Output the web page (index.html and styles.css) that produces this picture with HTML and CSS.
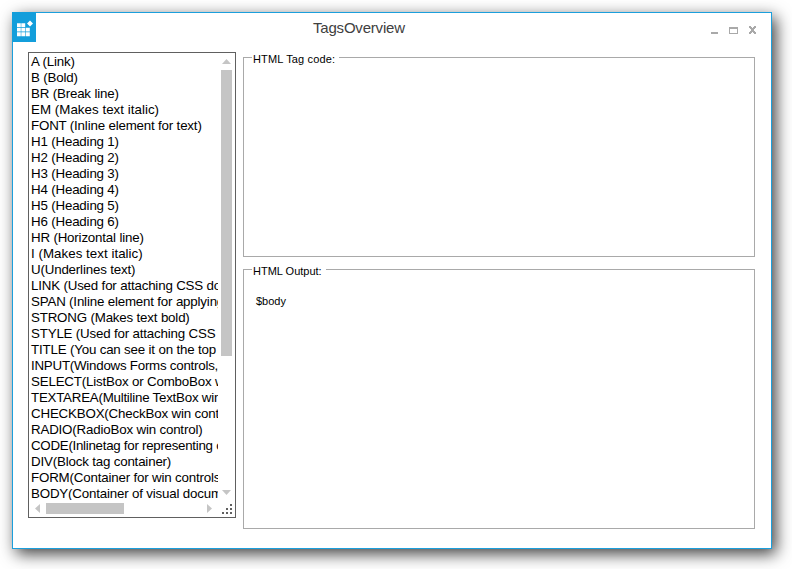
FILE: index.html
```
<!DOCTYPE html>
<html lang="en">
<head>
<meta charset="utf-8">
<title>TagsOverview</title>
<link rel="stylesheet" href="styles.css">
</head>
<body>
<main class="window">
  <header class="titlebar">
    <svg class="app-icon" width="24" height="30" viewBox="0 0 24 30">
      <rect width="24" height="30" fill="#139edb"/>
      <path fill="#fff" d="M5 11.200h3.800V15H5zM9.300 11.200h3.900V15H9.300zM5 15.700h3.800v3.900H5zM9.300 15.700h3.900v3.900H9.300zM13.800 15.700h4v3.900h-4zM5 20.300h3.800v4H5zM9.300 20.300h3.900v4H9.300zM13.800 20.300h4v4h-4zM18 8.500l3 3-3 3-3-3z"/>
    </svg>
    <h1 class="title">TagsOverview</h1>
    <svg class="controls" width="48" height="10" viewBox="0 0 48 10" shape-rendering="crispEdges" fill="#a9a9a9">
      <path d="M0 6h7v2H0z"/>
      <path fill-rule="evenodd" d="M18 1h9v7h-9zM19 3v4h7V3z"/>
      <path d="M38 0h2v1h1v1h1V1h1V0h2v2h-1v1h-1v2h1v1h1v2h-2V7h-1V6h-1v1h-1v1h-2V6h1V5h1V3h-1V2h-1z"/>
    </svg>
  </header>
  <div class="content">
    <section class="listbox">
      <ul class="items">
        <li>A (Link)</li>
        <li>B (Bold)</li>
        <li>BR (Break line)</li>
        <li class="loose">EM (Makes text italic)</li>
        <li>FONT (Inline element for text)</li>
        <li>H1 (Heading 1)</li>
        <li>H2 (Heading 2)</li>
        <li>H3 (Heading 3)</li>
        <li>H4 (Heading 4)</li>
        <li>H5 (Heading 5)</li>
        <li>H6 (Heading 6)</li>
        <li>HR (Horizontal line)</li>
        <li class="loose">I (Makes text italic)</li>
        <li>U(Underlines text)</li>
        <li>LINK (Used for attaching CSS document)</li>
        <li>SPAN (Inline element for applying styles)</li>
        <li>STRONG (Makes text bold)</li>
        <li>STYLE (Used for attaching CSS styles)</li>
        <li>TITLE (You can see it on the top of page)</li>
        <li class="tight">INPUT(Windows Forms controls, buttons)</li>
        <li>SELECT(ListBox or ComboBox win control)</li>
        <li class="tight">TEXTAREA(Multiline TextBox win control)</li>
        <li>CHECKBOX(CheckBox win control)</li>
        <li>RADIO(RadioBox win control)</li>
        <li class="tighter">CODE(Inlinetag for representing code)</li>
        <li>DIV(Block tag container)</li>
        <li>FORM(Container for win controls)</li>
        <li>BODY(Container of visual document)</li>
      </ul>
      <div class="vscroll">
        <svg class="up" width="9" height="5" viewBox="0 0 9 5" fill="#c5c5c5"><path d="M4.500 0L9 5H0z"/></svg>
        <div class="vthumb"></div>
        <svg class="down" width="9" height="5" viewBox="0 0 9 5" fill="#c5c5c5"><path d="M0 0h9L4.500 5z"/></svg>
      </div>
      <div class="hscroll">
        <svg width="5" height="9" viewBox="0 0 5 9" fill="#c5c5c5"><path d="M5 0v9L0 4.500z"/></svg>
        <div class="hthumb"></div>
        <svg class="right" width="5" height="9" viewBox="0 0 5 9" fill="#c5c5c5"><path d="M0 0v9l5-4.500z"/></svg>
      </div>
      <svg class="grip" width="10" height="10" viewBox="0 0 10 10" fill="#606060" shape-rendering="crispEdges"><path d="M8 0h2v2H8zM4 4h2v2H4zM8 4h2v2H8zM0 8h2v2H0zM4 8h2v2H4zM8 8h2v2H8z"/></svg>
    </section>
    <div class="panels">
      <section class="group code">
        <h2 class="legend">HTML Tag code:</h2>
      </section>
      <section class="group output">
        <h2 class="legend">HTML Output:</h2>
        <p class="result">$body</p>
      </section>
    </div>
  </div>
</main>
</body>
</html>
```
FILE: styles.css
```
* { box-sizing: border-box; }

body {
  margin: 0;
  padding: 12px;
  height: 569px;
  overflow: hidden;
  background: #fff;
  color: #000;
  font-family: "Liberation Sans", Arial, sans-serif;
}

svg { display: block; flex: none; }

.window {
  width: 760px;
  height: 537px;
  border: 1px solid #1b9fdc;
  background: #fff;
  box-shadow: 4px 5px 15px rgba(0, 0, 0, 0.75);
}

.titlebar {
  display: flex;
  align-items: flex-start;
  height: 39px;
}

.app-icon { margin: -1px 0 0 -1px; }

.title {
  flex: 1;
  margin: 6px 0 0 277px;
  font-size: 15px;
  line-height: 18px;
  font-weight: normal;
  letter-spacing: -0.2px;
  color: #404040;
}

.controls { margin: 13px 12px 0 0; }

.content {
  display: flex;
  gap: 7px;
  padding-left: 15px;
}

.listbox {
  display: grid;
  grid-template-columns: 189px 17px;
  grid-template-rows: 447px 17px;
  width: 208px;
  height: 466px;
  border: 1px solid #606060;
}

.items {
  margin: 0;
  padding: 1px 0 0 2px;
  overflow: hidden;
  list-style: none;
  font-size: 13.33px;
  line-height: 16px;
  letter-spacing: -0.18px;
  white-space: nowrap;
}

.loose { letter-spacing: 0.03px; }
.tight { letter-spacing: -0.24px; }
.tighter { letter-spacing: -0.28px; }

.vscroll {
  display: flex;
  flex-direction: column;
  align-items: flex-start;
  padding: 6px 0 5px 3px;
}

.vthumb {
  width: 11px;
  height: 286px;
  margin-top: 6px;
  background: #c5c5c5;
}

.up { margin-left: 1px; }
.down { margin: auto 0 0 1px; }

.hscroll {
  display: flex;
  align-items: center;
  padding: 0 6px;
}

.hthumb {
  width: 78px;
  height: 11px;
  margin-left: 6px;
  background: #c5c5c5;
}

.right { margin-left: auto; }

.grip { margin: 4px 0 0 4px; }

.panels {
  display: flex;
  flex-direction: column;
  gap: 12px;
  padding-top: 5px;
}

.group {
  width: 512px;
  border: 1px solid #a9a9a9;
  padding-left: 8px;
}

.code { height: 200px; }
.output { height: 260px; }

.legend {
  width: max-content;
  margin: -6px 0 0;
  padding: 0 4px 0 1px;
  background: #fff;
  font-size: 11px;
  line-height: 14px;
  font-weight: normal;
}

.code .legend { letter-spacing: 0.15px; }

.result {
  margin: 16px 0 0 4px;
  font-size: 11px;
  line-height: 14px;
}
```
